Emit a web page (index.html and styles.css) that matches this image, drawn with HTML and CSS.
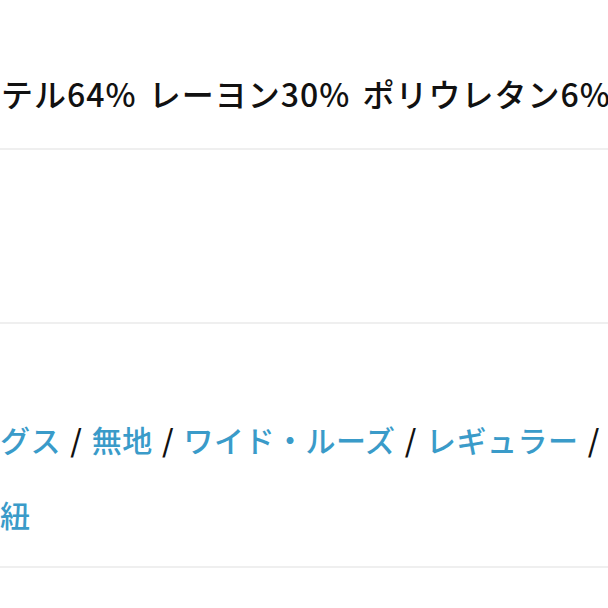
FILE: index.html
```html
<!DOCTYPE html>
<html lang="ja">

<head>
    <meta charset="UTF-8">
    <meta name="viewport" content="width=device-width, initial-scale=1.0">
    <title>商品詳細</title>
    <link rel="stylesheet" href="styles.css">
</head>

<body>

    <div class="spec-row">
        <p class="spec-value">テル64% レーヨン30% ポリウレタン6%</p>
    </div>

    <div class="spec-row spec-empty"></div>

    <div class="spec-row tag-row">
        <p class="tag-list">
            <a href="#">グス</a> / <a href="#">無地</a> / <a href="#">ワイド・ルーズ</a> / <a href="#">レギュラー</a> /
        </p>
        <p class="tag-list">
            <a href="#">紐</a>
        </p>
    </div>

    <footer class="page-footer"></footer>

</body>

</html>
```

FILE: styles.css
```css
body {
    margin: 0;
    font-family: "Noto Sans CJK JP", "Noto Sans", sans-serif;
    background-color: #fff;
    color: #111;
    overflow: hidden;
}

.spec-row {
    border-bottom: 2px solid #efefef;
    overflow: hidden;
}

.spec-value {
    margin: 0;
    padding: 72px 0 34px 1px;
    font-size: 32px;
    line-height: 42px;
    font-weight: 500;
    letter-spacing: 1px;
    word-spacing: 4px;
    white-space: nowrap;
}

.spec-empty {
    height: 172px;
}

.tag-row {
    padding: 78px 0 14px 0;
}

.tag-list {
    margin: 0;
    font-size: 30px;
    line-height: 75px;
    font-weight: 500;
    word-spacing: 2px;
    letter-spacing: 0.5px;
    white-space: nowrap;
}

.tag-list a {
    color: #3a9bc9;
    text-decoration: none;
}

.page-footer {
    margin-top: 40px;
    height: 2px;
    background-color: #474747;
}
```
